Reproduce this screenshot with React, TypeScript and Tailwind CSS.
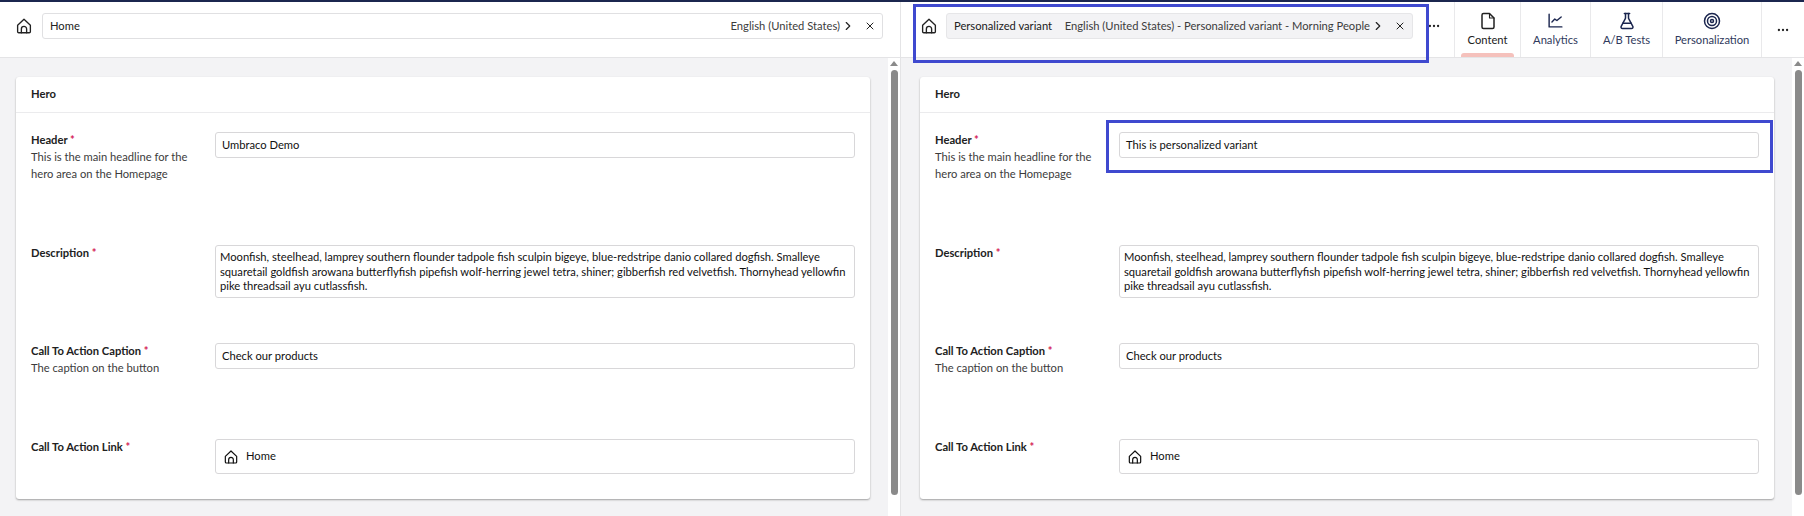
import type { ReactNode } from 'react';
import { ChevronRight, Ellipsis, FlaskConical, X } from 'lucide-react';

const LOREM =
  'Moonfish, steelhead, lamprey southern flounder tadpole fish sculpin bigeye, blue-redstripe danio collared dogfish. Smalleye squaretail goldfish arowana butterflyfish pipefish wolf-herring jewel tetra, shiner; gibberfish red velvetfish. Thornyhead yellowfin pike threadsail ayu cutlassfish.';

function HomeIcon({ size = 18 }: { size?: number }) {
  return (
    <svg width={size} height={size} viewBox="0 0 24 24" fill="none" stroke="currentColor" strokeWidth="1.800" strokeLinejoin="round" strokeLinecap="round">
      <path d="M3.500 11 12 3l8.500 8v8.500a1.500 1.500 0 0 1-1.500 1.500H5a1.500 1.500 0 0 1-1.500-1.500z" />
      <path d="M8.500 21v-5a3.500 3.500 0 0 1 7 0v5" />
    </svg>
  );
}

function FileIcon() {
  return (
    <svg width="18" height="18" viewBox="0 0 24 24" fill="none" stroke="currentColor" strokeWidth="2" strokeLinejoin="round" strokeLinecap="round">
      <path d="M6 2h8l6 6v12a2 2 0 0 1-2 2H6a2 2 0 0 1-2-2V4a2 2 0 0 1 2-2z" />
      <path d="M14 2v6h6" strokeWidth="1.500" />
    </svg>
  );
}

function AnalyticsIcon() {
  return (
    <svg width="17" height="17" viewBox="0 0 24 24" fill="none" stroke="currentColor" strokeWidth="2" strokeLinecap="round" strokeLinejoin="round">
      <path d="M3 3v18h18" />
      <path d="m7 14 4-4 3 2 6-5" />
    </svg>
  );
}

function TargetIcon() {
  return (
    <svg width="18" height="18" viewBox="0 0 24 24" fill="none" stroke="currentColor" strokeWidth="2">
      <circle cx="12" cy="12" r="10" />
      <circle cx="12" cy="12" r="6" />
      <circle cx="12" cy="12" r="2" />
    </svg>
  );
}

function Label({ text, hint }: { text: string; hint?: string[] }) {
  return (
    <div className="w-[184px] shrink-0">
      <div className="text-[11.200px] leading-[15px] font-bold text-[#212121]">
        {text} <span className="text-[#d42054]">*</span>
      </div>
      {hint && (
        <div className="text-[11.200px] leading-[17px] text-[#3c3c3c] mt-[1px]">
          {hint.map((line) => (
            <div key={line}>{line}</div>
          ))}
        </div>
      )}
    </div>
  );
}

function TextBox({ value }: { value: string }) {
  return (
    <div className="h-[26px] flex items-center px-[6px] bg-white border border-[#d8d7d9] rounded-[3px] text-[11.200px] text-[#111]">
      {value}
    </div>
  );
}

function Editor({ header, marked }: { header: string; marked?: boolean }) {
  return (
    <div className="bg-white rounded-[3px] shadow-[0_1px_2px_rgba(0,0,0,0.35)] h-[422px]">
      <div className="h-[36px] flex items-center px-[15px] border-b border-[#ebebed] text-[11.200px] font-bold text-[#212121]">
        Hero
      </div>
      <div className="pt-[19px] pl-[15px] pr-[15px]">
        <div className="flex h-[113px]">
          <Label text="Header" hint={['This is the main headline for the', 'hero area on the Homepage']} />
          <div className="flex-1 self-start relative">
            <TextBox value={header} />
            {marked && <div className="absolute -left-[13px] -right-[14px] -top-[12px] -bottom-[15px] border-[3px] border-[#3f49cf]" />}
          </div>
        </div>
        <div className="flex h-[98px]">
          <Label text="Description" />
          <div className="flex-1 self-start h-[53px] px-[4px] py-[4px] bg-white border border-[#d8d7d9] rounded-[3px] text-[11.200px] leading-[14.500px] text-[#111]">
            {LOREM}
          </div>
        </div>
        <div className="flex h-[96px]">
          <Label text="Call To Action Caption" hint={['The caption on the button']} />
          <div className="flex-1 self-start">
            <TextBox value="Check our products" />
          </div>
        </div>
        <div className="flex h-[35px]">
          <Label text="Call To Action Link" />
          <div className="flex-1 flex items-center gap-[7px] px-[7px] bg-white border border-[#d8d7d9] rounded-[3px] text-[11.200px] text-[#111]">
            <HomeIcon size={16} />
            Home
          </div>
        </div>
      </div>
    </div>
  );
}

function Scrollbar() {
  return (
    <div className="w-[12px] shrink-0 bg-white flex flex-col items-center pt-[3px]">
      <div className="w-0 h-0 border-l-[4px] border-r-[4px] border-b-[5px] border-l-transparent border-r-transparent border-b-[#8a8a8a]" />
      <div className="w-[7px] h-[425px] mt-[4px] rounded-[4px] bg-[#8a8a8a]" />
    </div>
  );
}

function Tab({ icon, label, width, active }: { icon: ReactNode; label: string; width: string; active?: boolean }) {
  return (
    <div className={`relative h-full shrink-0 flex flex-col items-center pt-[9px] border-r border-[#e9e9eb] ${active ? 'text-[#212121]' : 'text-[#1b264f]'} ${width}`}>
      <div className="h-[19px] flex items-center justify-center">{icon}</div>
      <div className={`text-[11.200px] leading-[15px] mt-[2px] ${active ? 'text-[#212121]' : 'text-[#303a5c]'}`}>{label}</div>
      {active && <div className="absolute left-[6px] right-[6px] bottom-0 h-[4px] rounded-t-[3px] bg-[#f5c1bc]" />}
    </div>
  );
}

export default function App() {
  return (
    <div className="w-[1804px] h-[516px] overflow-hidden bg-[#f3f3f5] font-['Lato','Noto_Sans',sans-serif]">
      <div className="h-[2px] bg-[#1b264f]" />
      <div className="flex h-[514px]">
        <div className="w-[900px] shrink-0 flex flex-col">
          <div className="h-[56px] shrink-0 bg-white border-b border-[#e4e4e6] flex items-start pl-[15px] pr-[17px]">
            <div className="w-[27px] h-[26px] mt-[11px] flex items-center text-[#222]">
              <HomeIcon />
            </div>
            <div className="flex-1 h-[26px] mt-[11px] flex items-center justify-between pl-[7px] pr-[6px] bg-white border border-[#e0e0e2] rounded-[3px] text-[11.200px] whitespace-nowrap">
              <span className="text-[#212121]">Home</span>
              <span className="flex items-center text-[#3c3c3c]">
                English (United States)
                <ChevronRight size={14} className="ml-[1px] text-[#222]" />
                <X size={12} className="ml-[9px] text-[#222]" />
              </span>
            </div>
          </div>
          <div className="flex-1 flex min-h-0">
            <div className="flex-1 pt-[19px] pl-[16px] pr-[18px]">
              <Editor header="Umbraco Demo" />
            </div>
            <Scrollbar />
          </div>
        </div>

        <div className="flex-1 min-w-0 flex flex-col border-l border-[#e4e4e6] relative">
          <div className="h-[56px] shrink-0 bg-white border-b border-[#e4e4e6] flex items-start pl-[19px]">
            <div className="w-[26px] h-[26px] mt-[11px] flex items-center text-[#222]">
              <HomeIcon />
            </div>
            <div className="w-[467px] h-[26px] mt-[11px] shrink-0 flex items-center pl-[7px] pr-[6px] bg-[#f3f3f5] border border-[#e6e6e8] rounded-[3px] text-[11.200px] text-[#3c3c3c] whitespace-nowrap">
              <span className="text-[#212121]">Personalized variant</span>
              <span className="ml-auto flex items-center">
                English (United States) - Personalized variant - Morning People
                <ChevronRight size={14} className="ml-[1px] text-[#222]" />
                <X size={12} className="ml-[9px] text-[#222]" />
              </span>
            </div>
            <div className="w-[41px] h-[26px] mt-[11px] shrink-0 flex items-center pl-[14px] text-[#222]">
              <Ellipsis size={14} />
            </div>
            <div className="h-full flex border-l border-[#e9e9eb]">
              <Tab icon={<FileIcon />} label="Content" width="w-[66px]" active />
              <Tab icon={<AnalyticsIcon />} label="Analytics" width="w-[70px]" />
              <Tab icon={<FlaskConical size={18} />} label="A/B Tests" width="w-[72px]" />
              <Tab icon={<TargetIcon />} label="Personalization" width="w-[99px]" />
            </div>
            <div className="flex-1 h-full flex items-center justify-center text-[#222]">
              <Ellipsis size={14} />
            </div>
          </div>
          <div className="flex-1 flex min-h-0">
            <div className="flex-1 pt-[19px] pl-[19px] pr-[18px]">
              <Editor header="This is personalized variant" marked />
            </div>
            <Scrollbar />
          </div>
          <div className="absolute left-[12px] top-[2px] w-[516px] h-[59px] border-[3px] border-[#3f49cf]" />
        </div>
      </div>
    </div>
  );
}
